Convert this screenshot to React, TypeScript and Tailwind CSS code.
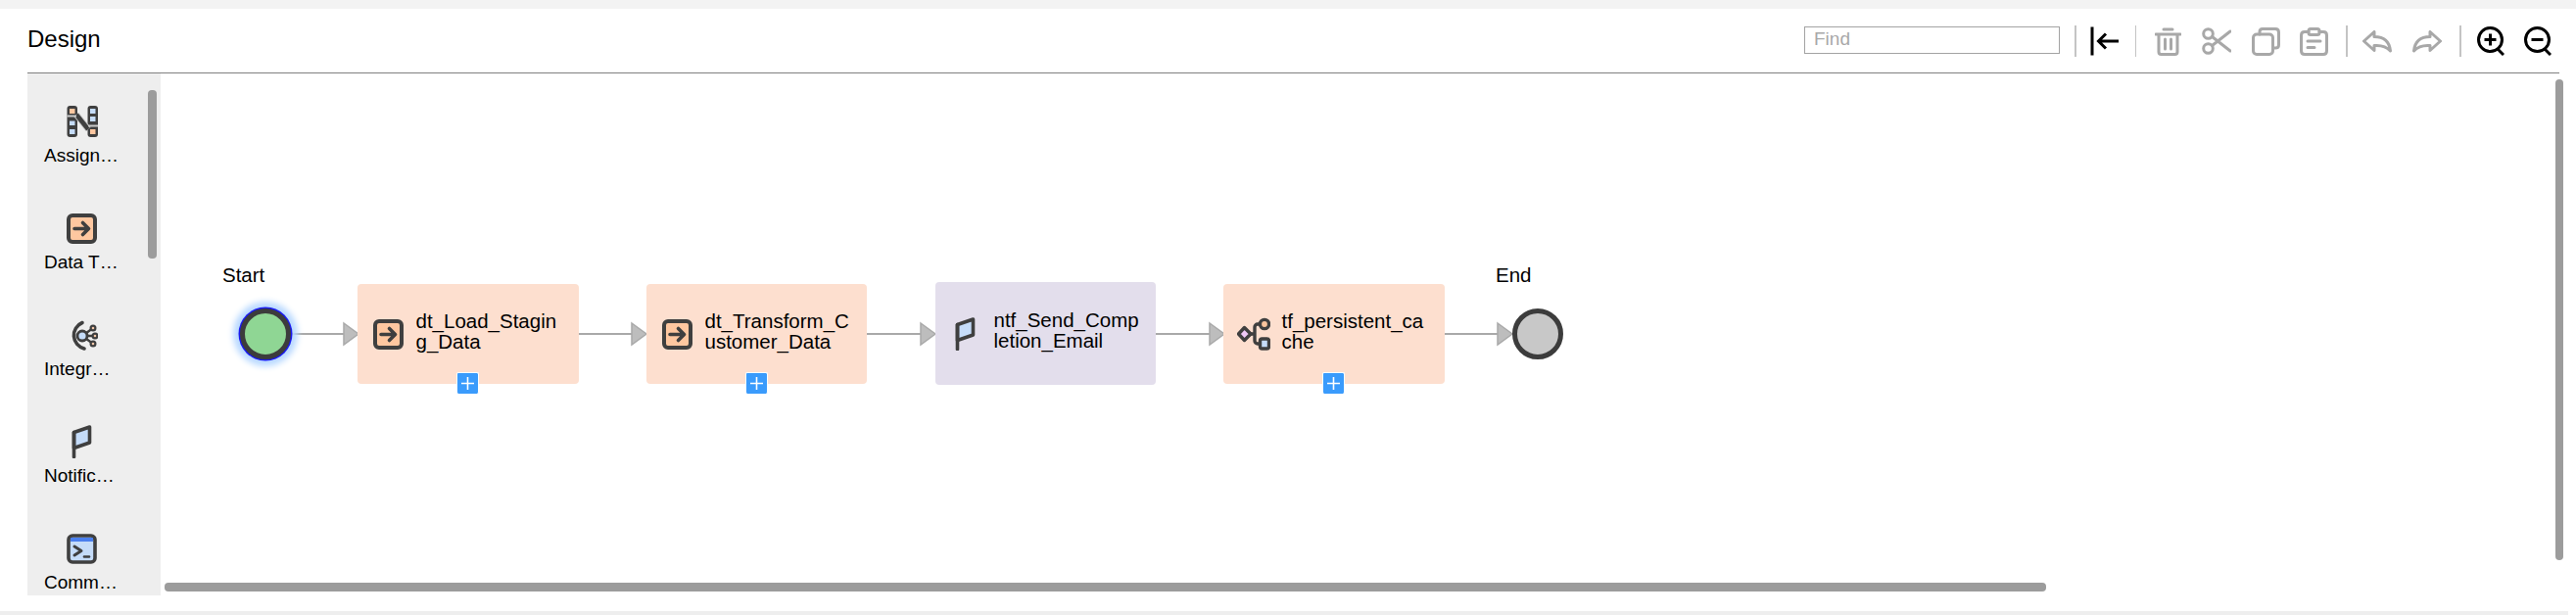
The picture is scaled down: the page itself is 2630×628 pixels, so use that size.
const DARK = '#3f3f3f'
const BLUE = '#c5dcf9'
const PEACH = '#fec7a0'
const GREY = '#a8a8a8'

function AssignIcon() {
  return (
    <svg width="32" height="32" viewBox="0 0 32 32">
      <rect x="0.5" y="0" width="10.5" height="32" rx="3" fill={DARK} />
      <rect x="21.5" y="0" width="10.5" height="32" rx="3" fill={DARK} />
      <path d="M10 9 L22 24" stroke="#c9c9c9" strokeWidth="6.5" />
      <path d="M10 9 L22 24" stroke={DARK} strokeWidth="4.5" />
      <path d="M0.5 10.5 H10 M22 20.5 H32" stroke="#c9c9c9" strokeWidth="2" />
      <rect x="3" y="3" width="5.5" height="5" fill={PEACH} />
      <rect x="3" y="15.5" width="5.5" height="4.5" fill={BLUE} />
      <rect x="3" y="24" width="5.5" height="5" fill={BLUE} />
      <rect x="24" y="3" width="5.5" height="5" fill={BLUE} />
      <rect x="24" y="11" width="5.5" height="5" fill={BLUE} />
      <rect x="24" y="24" width="5.5" height="5" fill={PEACH} />
    </svg>
  )
}

function DataIcon() {
  return (
    <svg width="31" height="31" viewBox="0 0 31 31">
      <rect x="2" y="2" width="27" height="27" rx="4" fill={PEACH} stroke={DARK} strokeWidth="4" />
      <path d="M8 15.5 H22 M16.5 9.5 L22.5 15.5 L16.5 21.5" fill="none" stroke={DARK} strokeWidth="3.6" strokeLinecap="round" strokeLinejoin="round" />
    </svg>
  )
}

function IntegrationIcon() {
  return (
    <svg width="32" height="33" viewBox="0 0 32 33">
      <path d="M16 3.5 A14 14 0 0 0 18 30" fill="none" stroke={DARK} strokeWidth="3.6" strokeLinecap="round" />
      <path d="M16 17 L27 9 M16 17 H29 M16 17 L27 25" stroke={DARK} strokeWidth="2.4" />
      <circle cx="16" cy="17" r="5" fill={BLUE} stroke={DARK} strokeWidth="2.8" />
      <circle cx="27" cy="9" r="2.4" fill="#f3c7a8" stroke={DARK} strokeWidth="2.2" />
      <circle cx="29" cy="17" r="2.4" fill="#f3c7a8" stroke={DARK} strokeWidth="2.2" />
      <circle cx="27" cy="25" r="2.4" fill="#f3c7a8" stroke={DARK} strokeWidth="2.2" />
    </svg>
  )
}

function FlagIcon({ className }: { className?: string }) {
  return (
    <svg width="21" height="34" viewBox="0 0 21 34" className={className}>
      <path d="M2.5 7.5 L18.5 2 V18 L2.5 23.5 Z" fill={BLUE} stroke={DARK} strokeWidth="3.6" strokeLinejoin="round" />
      <path d="M2.5 7.5 V32.5" stroke={DARK} strokeWidth="3.6" strokeLinecap="round" />
    </svg>
  )
}

function CommandIcon() {
  return (
    <svg width="31" height="31" viewBox="0 0 31 31">
      <rect x="2" y="2" width="27" height="27" rx="4" fill={BLUE} stroke={DARK} strokeWidth="3.6" />
      <rect x="4" y="4" width="23" height="4" fill="#4a7fee" />
      <path d="M8 13 L15 17.5 L8 22" fill="none" stroke={DARK} strokeWidth="3" strokeLinecap="round" strokeLinejoin="round" />
      <path d="M18 23.5 H23" stroke={DARK} strokeWidth="2.6" strokeLinecap="round" />
    </svg>
  )
}

function TreeIcon({ className }: { className?: string }) {
  return (
    <svg width="34" height="34" viewBox="0 0 34 34" className={className}>
      <path d="M13 17 H18 M24 7 H21 A3 3 0 0 0 18 10 V24 A3 3 0 0 0 21 27 H24" fill="none" stroke={DARK} strokeWidth="3.4" />
      <path d="M7.5 10.5 L14 17 L7.5 23.5 L1.5 17 Z" fill="#eec8f6" stroke={DARK} strokeWidth="3.4" strokeLinejoin="round" />
      <circle cx="28" cy="7" r="4.6" fill="#f9c49d" stroke={DARK} strokeWidth="3.4" />
      <rect x="23.5" y="22" width="9" height="10" rx="2" fill={BLUE} stroke={DARK} strokeWidth="3.4" />
    </svg>
  )
}

function Sep({ className }: { className: string }) {
  return <div className={`h-[32px] w-[2px] shrink-0 bg-[#c4c4c4] ${className}`} />
}

function Toolbar() {
  const gray = { fill: 'none', stroke: GREY, strokeWidth: 3, strokeLinecap: 'round', strokeLinejoin: 'round' } as const
  return (
    <div className="flex items-center pr-[8px] pt-[1px]">
      <input placeholder="Find" className="-mt-[3px] h-[28px] w-[261px] border-[1.5px] border-[#a3a3a3] px-[9px] text-[19px] outline-none placeholder:text-[#a8a8a8]" />
      <Sep className="ml-[15px]" />
      <svg width="30" height="30" viewBox="0 0 30 30" className="ml-[14px]">
        <path d="M2 0.5 V29.5" stroke="#000" strokeWidth="3" />
        <path d="M9 15 H29 M16 7.5 L8.5 15 L16 22.5" fill="none" stroke="#000" strokeWidth="3" />
      </svg>
      <Sep className="ml-[16px] !w-[1px]" />
      <svg width="27" height="29" viewBox="0 0 27 29" className="ml-[19px]">
        <path d="M1 7 H26 M9 2 H18 M4 7 V25 Q4 27.5 6.5 27.5 H20.5 Q23 27.5 23 25 V7 M10.5 12 V22 M16.5 12 V22" {...gray} />
      </svg>
      <svg width="30" height="28" viewBox="0 0 30 28" className="ml-[21px]">
        <circle cx="6.5" cy="6.5" r="4.8" {...gray} />
        <circle cx="6.5" cy="21.5" r="4.8" {...gray} />
        <path d="M10.5 9.5 L29 24 M10.5 18.5 L29 4" {...gray} />
      </svg>
      <svg width="29" height="29" viewBox="0 0 29 29" className="ml-[21px]">
        <rect x="1.5" y="7" width="20" height="20.5" rx="3.5" {...gray} />
        <path d="M8 7 V4.5 Q8 1.5 11 1.5 H24 Q27.5 1.5 27.5 5 V18 Q27.5 21 24 21 H21.5" {...gray} />
      </svg>
      <svg width="29" height="29" viewBox="0 0 29 29" className="ml-[20px]">
        <path d="M9 4.5 H5 Q1.5 4.5 1.5 8 V24 Q1.5 27.5 5 27.5 H24 Q27.5 27.5 27.5 24 V8 Q27.5 4.5 24 4.5 H20" {...gray} />
        <rect x="9" y="1.5" width="11" height="6" rx="2" {...gray} />
        <path d="M8 14 H21 M8 20.5 H15" {...gray} />
      </svg>
      <Sep className="ml-[18px]" />
      <svg width="30" height="23" viewBox="0 0 30 23" className="ml-[15px]">
        <path d="M1.5 11 L12 1.5 V6.5 C21 6.5 27.5 11 28.5 21 C24 16 18 15 12 15.5 V20.5 Z" {...gray} />
      </svg>
      <svg width="30" height="23" viewBox="0 0 30 23" className="ml-[21px]">
        <path d="M28.5 11 L18 1.5 V6.5 C9 6.5 2.5 11 1.5 21 C6 16 12 15 18 15.5 V20.5 Z" {...gray} />
      </svg>
      <Sep className="ml-[18px]" />
      <svg width="28" height="30" viewBox="0 0 28 30" className="ml-[16px]">
        <circle cx="13.5" cy="13.5" r="12" fill="none" stroke="#000" strokeWidth="3" />
        <path d="M7.5 13.5 H19.5 M13.5 7.5 V19.5" stroke="#000" strokeWidth="3" />
        <path d="M21 23 L27 29" stroke="#000" strokeWidth="3" />
      </svg>
      <svg width="28" height="30" viewBox="0 0 28 30" className="ml-[20px]">
        <circle cx="13.5" cy="13.5" r="12" fill="none" stroke="#000" strokeWidth="3" />
        <path d="M7.5 13.5 H19.5" stroke="#000" strokeWidth="3" />
        <path d="M21 23 L27 29" stroke="#000" strokeWidth="3" />
      </svg>
    </div>
  )
}

const PALETTE = [
  { label: 'Assign…', icon: <AssignIcon /> },
  { label: 'Data T…', icon: <DataIcon /> },
  { label: 'Integr…', icon: <IntegrationIcon /> },
  { label: 'Notific…', icon: <FlagIcon /> },
  { label: 'Comm…', icon: <CommandIcon /> },
]

function Palette() {
  return (
    <div className="relative h-[533px] w-[136px] shrink-0 overflow-hidden bg-[#eeeeee] pl-[17px] pt-[33px]">
      {PALETTE.map(p => (
        <div key={p.label} className="h-[109px] w-[80px]">
          <div className="flex h-[32px] w-[77px] items-center justify-center">{p.icon}</div>
          <div className="mt-[8px] whitespace-nowrap text-[19px] leading-[21px] text-black">{p.label}</div>
        </div>
      ))}
      <div className="absolute left-[123px] top-[17px] h-[172px] w-[9px] rounded-[4px] bg-[#9c9c9c]" />
    </div>
  )
}

function Node({ left, top, size, bg, name, icon, plus }: { left: number; top: number; size: string; bg: string; name: string; icon: React.ReactNode; plus?: boolean }) {
  return (
    <div className={`absolute flex items-center rounded-[4px] pl-[16px] ${size} ${bg}`} style={{ left, top }}>
      <div className="flex w-[43.5px] shrink-0 items-center">{icon}</div>
      <div className="-mt-[7px] w-[151px] break-all text-[20.5px] leading-[21px] text-black">{name}</div>
      {plus && (
        <div className="absolute left-[101px] top-[90px] flex h-[22px] w-[23px] items-center justify-center rounded-[2px] border border-b-0 border-white bg-[#3a9bfc]">
          <svg width="15" height="15" viewBox="0 0 15 15"><path d="M7.5 1 V14 M1 7.5 H14" stroke="#fff" strokeWidth="1.6" /></svg>
        </div>
      )}
    </div>
  )
}

// x of line start and arrow tip, canvas coords
const EDGES = [[133, 202], [427, 496], [721, 791], [1016, 1086], [1311, 1380]]

function Canvas() {
  return (
    <div className="relative h-[549px] flex-1 overflow-hidden">
      <svg width="1500" height="300" className="absolute left-0 top-0">
        {EDGES.map(([a, b]) => (
          <g key={a}>
            <path d={`M${a} 266 H${b - 14}`} stroke="#a9a9a9" strokeWidth="2.2" />
            <path d={`M${b - 15} 255 L${b} 266 L${b - 15} 277 Z`} fill="#bdbdbd" stroke="#a9a9a9" strokeWidth="1.5" />
          </g>
        ))}
      </svg>
      <div className="absolute left-[63px] top-[195px] text-[20.5px] leading-[21px] text-black">Start</div>
      <div className="absolute left-[81px] top-[240px] h-[52px] w-[52px] rounded-full border-[5px] border-[#3c3c3c] bg-[#8fd694] shadow-[0_0_0_1.5px_#1a1af0,0_0_6px_7px_#b9d9ff]" />
      <Node left={201} top={215} size="h-[102px] w-[226px]" bg="bg-[#fddfcf]" name="dt_Load_Staging_Data" icon={<DataIcon />} plus />
      <Node left={496} top={215} size="h-[102px] w-[225px]" bg="bg-[#fddfcf]" name="dt_Transform_Customer_Data" icon={<DataIcon />} plus />
      <Node left={791} top={213} size="h-[105px] w-[225px]" bg="bg-[#e3deec]" name="ntf_Send_Completion_Email" icon={<FlagIcon className="ml-[4px]" />} />
      <Node left={1085} top={215} size="h-[102px] w-[226px]" bg="bg-[#fddfcf]" name="tf_persistent_cache" icon={<TreeIcon className="-ml-[2px]" />} plus />
      <div className="absolute left-[1363px] top-[195px] text-[20.5px] leading-[21px] text-black">End</div>
      <div className="absolute left-[1380px] top-[240px] h-[52px] w-[52px] rounded-full border-[5px] border-[#3c3c3c] bg-[#c8c8c8]" />
      <div className="absolute left-[4px] top-[520px] h-[9px] w-[1921px] rounded-[4px] bg-[#9c9c9c]" />
      <div className="absolute left-[2445px] top-[6px] h-[491px] w-[8px] rounded-[4px] bg-[#9c9c9c]" />
    </div>
  )
}

export default function App() {
  return (
    <div className="relative h-[628px] w-full overflow-hidden bg-white font-['Liberation_Sans',Arial,sans-serif]">
      <div className="h-[9px] bg-[#f3f3f3]" />
      <div className="ml-[28px] mr-[17px] flex h-[66px] items-center justify-between border-b border-[#808080]">
        <h1 className="pb-[3px] text-[24px] leading-none text-black">Design</h1>
        <Toolbar />
      </div>
      <div className="ml-[28px] flex">
        <Palette />
        <Canvas />
      </div>
      <div className="absolute bottom-0 left-0 h-[4px] w-[2622px] bg-[#eeeeee]" />
    </div>
  )
}
